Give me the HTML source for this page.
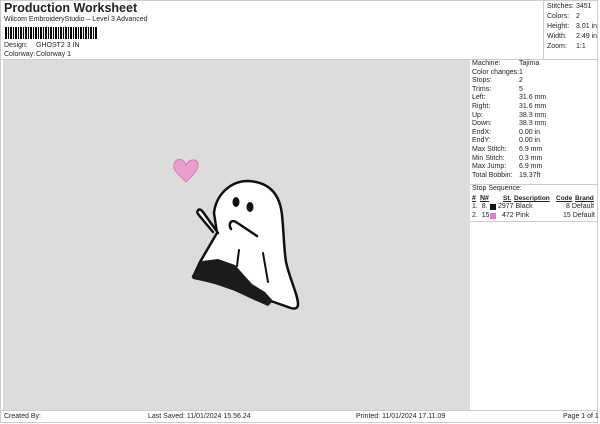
<html><head><style>
body{margin:0;width:600px;height:424px;background:#fff;font-family:"Liberation Sans",sans-serif;color:#222;position:relative;overflow:hidden}
.a{position:absolute;font-size:7px;white-space:nowrap}
</style></head><body>
<div class="a" style="left:4px;top:1px;font-size:12.5px;font-weight:bold">Production Worksheet</div>
<div class="a" style="left:4px;top:16px">Wilcom EmbroideryStudio – Level 3 Advanced</div>
<div style="position:absolute;left:5px;top:27px;width:93px;height:12px;background:repeating-linear-gradient(90deg,#000 0 2px,#fff 2px 3px,#000 3px 4px,#fff 4px 5px)"></div>
<div class="a" style="left:4px;top:42px">Design:</div><div class="a" style="left:36px;top:42px">GHOST2 3 IN</div>
<div class="a" style="left:4px;top:51px">Colorway:</div><div class="a" style="left:36px;top:51px">Colorway 1</div>
<div style="position:absolute;left:0;top:0;width:598px;height:423px;border:1px solid #ccc;box-sizing:border-box"></div>
<div style="position:absolute;left:543px;top:0;width:1px;height:59px;background:#ccc"></div>
<div class="a" style="left:547px;top:2px;line-height:10px">Stitches:<br>Colors:<br>Height:<br>Width:<br>Zoom:</div>
<div class="a" style="left:576px;top:2px;line-height:10px">3451<br>2<br>3.01 in<br>2.49 in<br>1:1</div>
<div style="position:absolute;left:3px;top:59px;width:467px;height:351px;background:#dcdcdc"></div>
<div style="position:absolute;left:0;top:59px;width:598px;height:1px;background:#ccc"></div>
<div style="position:absolute;left:0;top:410px;width:598px;height:1px;background:#ccc"></div>
<div class="a" style="left:472px;top:60px;line-height:8.6px">Machine:<br>Color changes:<br>Stops:<br>Trims:<br>Left:<br>Right:<br>Up:<br>Down:<br>EndX:<br>EndY:<br>Max Stitch:<br>Min Stitch:<br>Max Jump:<br>Total Bobbin:</div>
<div class="a" style="left:519px;top:60px;line-height:8.6px">Tajima<br>1<br>2<br>5<br>31.6 mm<br>31.6 mm<br>38.3 mm<br>38.3 mm<br>0.00 in<br>0.00 in<br>6.9 mm<br>0.3 mm<br>6.9 mm<br>19.37ft</div>
<div style="position:absolute;left:470px;top:184px;width:128px;height:1px;background:#ccc"></div>
<div class="a" style="left:472px;top:185px">Stop Sequence:</div>
<div class="a" style="left:472px;top:195px;font-weight:bold;text-decoration:underline">#</div>
<div class="a" style="left:480px;top:195px;font-weight:bold;text-decoration:underline">N#</div>
<div class="a" style="left:503px;top:195px;font-weight:bold;text-decoration:underline;font-size:6.5px">St.</div>
<div class="a" style="left:514px;top:195px;font-weight:bold;text-decoration:underline;font-size:6.5px">Description</div>
<div class="a" style="left:556px;top:195px;font-weight:bold;text-decoration:underline;font-size:6.5px">Code</div>
<div class="a" style="left:575px;top:195px;font-weight:bold;text-decoration:underline;font-size:6.5px">Brand</div>
<div class="a" style="left:472px;top:203px">1.&nbsp; 8.</div><div style="position:absolute;left:490px;top:204px;width:6px;height:6px;background:#111"></div>
<div class="a" style="left:498px;top:203px">2977 Black</div><div class="a" style="left:566px;top:203px">8 Default</div>
<div class="a" style="left:472px;top:212px">2.&nbsp; 15</div><div style="position:absolute;left:490px;top:213px;width:6px;height:6px;background:#e77ad0"></div>
<div class="a" style="left:502px;top:212px">472 Pink</div><div class="a" style="left:563px;top:212px">15 Default</div>
<div style="position:absolute;left:470px;top:221px;width:128px;height:1px;background:#ccc"></div>
<div class="a" style="left:4px;top:413px">Created By:</div>
<div class="a" style="left:148px;top:413px">Last Saved: 11/01/2024 15.56.24</div>
<div class="a" style="left:356px;top:413px">Printed: 11/01/2024 17.11.09</div>
<div class="a" style="left:563px;top:413px">Page 1 of 1</div>
<svg style="position:absolute;left:0;top:0" width="600" height="424">
<path d="M186,165 C182,155 172,160 174,168 C176,174 184,179 186,182 C190,178 197,172 198,166 C199,159 190,157 186,165Z" fill="#e9a0cf" stroke="#d878b5" stroke-width="1"/>
<path d="M214,213 C216,195 230,181 248,181 C270,182 280,195 282,215 C284,235 284,250 286,262 C290,280 298,295 298,304 C298,310 293,309 288,307 L268,300 L235,288 L193,277 L200,262 L217,233 Z" fill="#fff" stroke="#111" stroke-width="2.5" stroke-linejoin="round"/>
<path d="M218,233 L203,212 C199,207 196,211 198,214 L213,232" fill="#fff" stroke="#111" stroke-width="2.5" stroke-linecap="round"/>
<path d="M257,236 L236,222 C231,219 228,224 231,229" fill="none" stroke="#111" stroke-width="2.5" stroke-linecap="round"/>
<ellipse cx="236" cy="202" rx="3.5" ry="5" fill="#111"/>
<ellipse cx="250" cy="207" rx="3.5" ry="5" fill="#111"/>
<path d="M239,250 L237,266 M263,253 L268,282" stroke="#111" stroke-width="2" stroke-linecap="round"/>
<path d="M192,276 L202,261 L218,259 L235,265 L252,284 L265,292 L273,301 L268,306 L252,299 L235,291 L212,283 L193,279Z" fill="#1b1b1b"/>
</svg>
</body></html>
